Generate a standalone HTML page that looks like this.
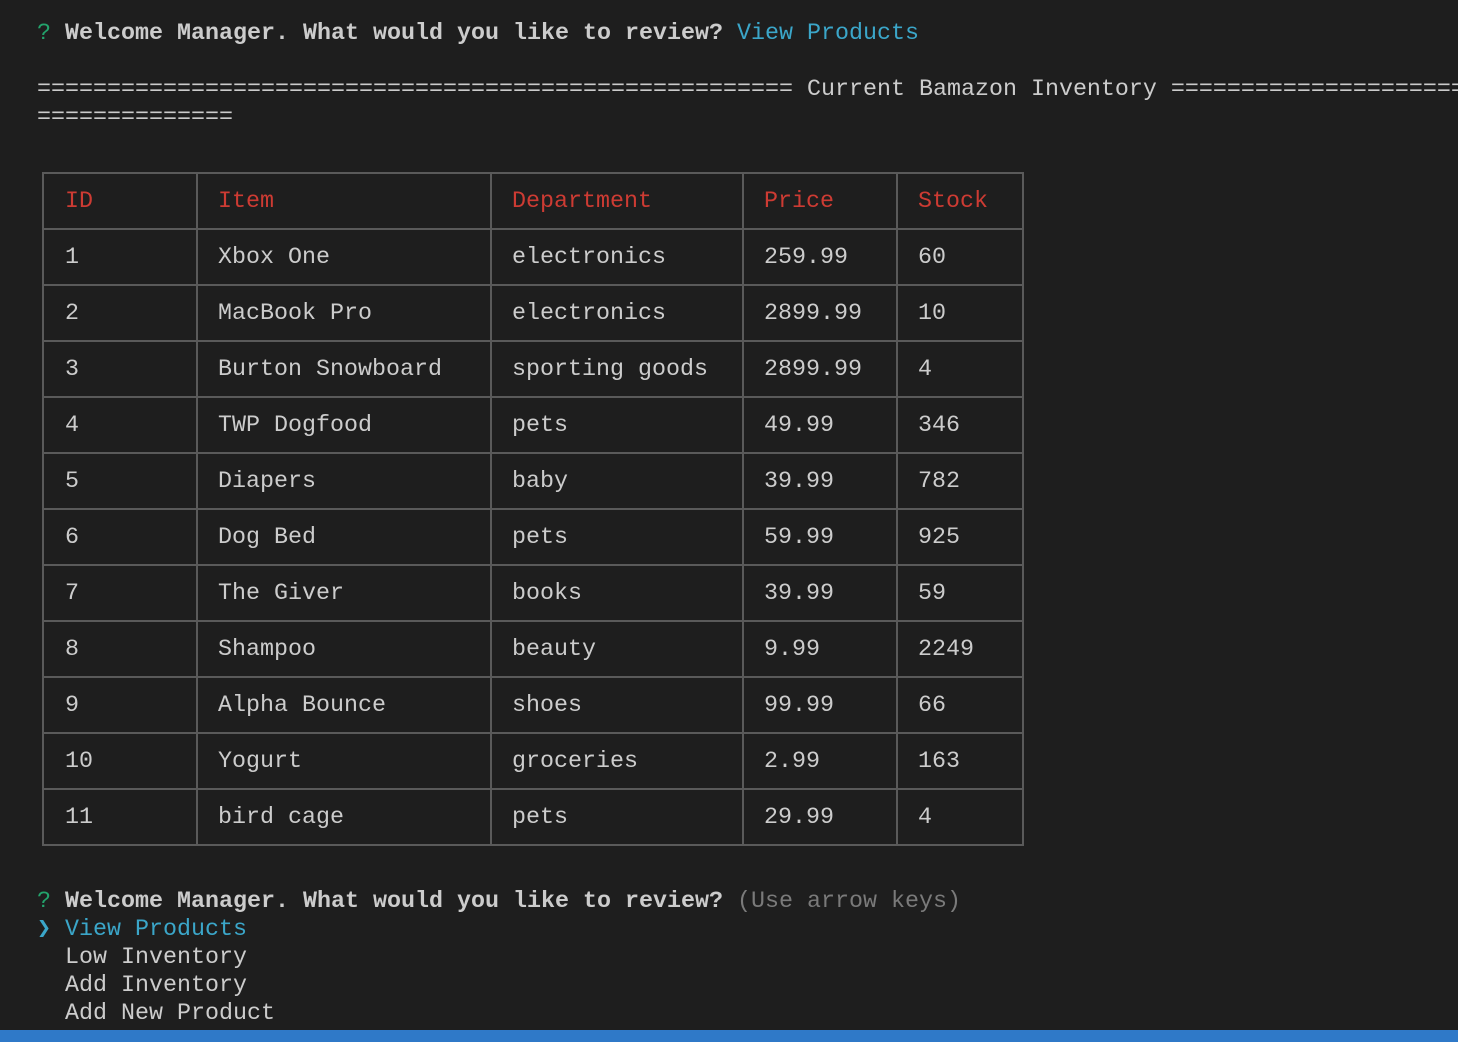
<!DOCTYPE html>
<html><head><meta charset="utf-8"><style>
html,body{margin:0;padding:0;background:#1e1e1e;width:1458px;height:1042px;overflow:hidden}
body{font-family:"Liberation Mono","DejaVu Sans Mono",monospace;font-size:23.33px;color:#cccccc;position:relative}
.l{position:absolute;left:37px;line-height:28px;white-space:pre}
.t{position:absolute;line-height:28px;white-space:pre}
.b{font-weight:bold}
.g{color:#23a36c}.c{color:#3ba6c9}.r{color:#cd3b33}.d{color:#7a7a7a}
.h{position:absolute;left:42px;width:982px;height:2px;background:#5a5a5a}
.v{position:absolute;top:172px;width:2px;height:674px;background:#5a5a5a}
.bar{position:absolute;left:0;top:1030px;width:1458px;height:12px;background:#2f79c8}
</style></head><body>
<div class="l" style="top:20px"><span class="g">?</span> <span class="b">Welcome Manager. What would you like to review?</span> <span class="c">View Products</span></div>
<div class="l" style="top:76px">====================================================== Current Bamazon Inventory ======================</div>
<div class="l" style="top:104px">==============</div>
<div class="h" style="top:172px"></div><div class="h" style="top:228px"></div><div class="h" style="top:284px"></div><div class="h" style="top:340px"></div><div class="h" style="top:396px"></div><div class="h" style="top:452px"></div><div class="h" style="top:508px"></div><div class="h" style="top:564px"></div><div class="h" style="top:620px"></div><div class="h" style="top:676px"></div><div class="h" style="top:732px"></div><div class="h" style="top:788px"></div><div class="h" style="top:844px"></div>
<div class="v" style="left:42px"></div><div class="v" style="left:196px"></div><div class="v" style="left:490px"></div><div class="v" style="left:742px"></div><div class="v" style="left:896px"></div><div class="v" style="left:1022px"></div>
<div class="t r" style="left:65px;top:188px;line-height:28px">ID</div>
<div class="t r" style="left:218px;top:188px">Item</div>
<div class="t r" style="left:512px;top:188px">Department</div>
<div class="t r" style="left:764px;top:188px">Price</div>
<div class="t r" style="left:918px;top:188px">Stock</div>
<div class="t" style="left:65px;top:244px">1
 
2
 
3
 
4
 
5
 
6
 
7
 
8
 
9
 
10
 
11</div>
<div class="t" style="left:218px;top:244px">Xbox One
 
MacBook Pro
 
Burton Snowboard
 
TWP Dogfood
 
Diapers
 
Dog Bed
 
The Giver
 
Shampoo
 
Alpha Bounce
 
Yogurt
 
bird cage</div>
<div class="t" style="left:512px;top:244px">electronics
 
electronics
 
sporting goods
 
pets
 
baby
 
pets
 
books
 
beauty
 
shoes
 
groceries
 
pets</div>
<div class="t" style="left:764px;top:244px">259.99
 
2899.99
 
2899.99
 
49.99
 
39.99
 
59.99
 
39.99
 
9.99
 
99.99
 
2.99
 
29.99</div>
<div class="t" style="left:918px;top:244px">60
 
10
 
4
 
346
 
782
 
925
 
59
 
2249
 
66
 
163
 
4</div>
<div class="l" style="top:888px"><span class="g">?</span> <span class="b">Welcome Manager. What would you like to review?</span> <span class="d">(Use arrow keys)</span></div>
<div class="l c" style="top:916px">❯ View Products</div>
<div class="l" style="top:944px">  Low Inventory</div>
<div class="l" style="top:972px">  Add Inventory</div>
<div class="l" style="top:1000px">  Add New Product</div>
<div class="bar"></div>
</body></html>
